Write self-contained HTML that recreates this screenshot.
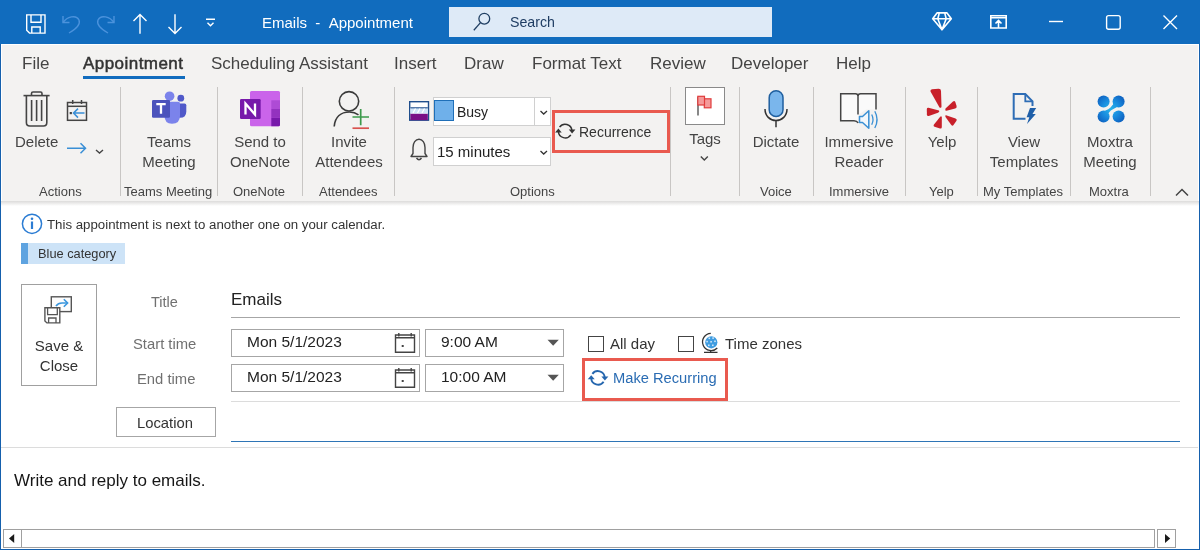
<!DOCTYPE html>
<html><head><meta charset="utf-8">
<style>
*{margin:0;padding:0;box-sizing:border-box}
html,body{width:1200px;height:550px;overflow:hidden;background:#fff;-webkit-font-smoothing:antialiased;font-family:"Liberation Sans",sans-serif;color:#444}
.a{position:absolute;white-space:nowrap}
.tab,.big,.grp,.a,.lbl,.val{will-change:transform}
#title{position:absolute;left:0;top:0;width:1200px;height:44px;background:#116cbe}
#lb{position:absolute;left:0;top:44px;width:1px;height:506px;background:#1560ad}
#rb{position:absolute;left:1199px;top:44px;width:1px;height:506px;background:#1560ad}
#bb{position:absolute;left:0;top:549px;width:1200px;height:1px;background:#1560ad}
#tabs{position:absolute;left:2px;top:45px;width:1196px;height:157px;background:#f3f2f1}
#shadow{position:absolute;left:1px;top:201px;width:1198px;height:5px;background:linear-gradient(#dcdbda,#fff)}
.tab{position:absolute;top:54px;font-size:17px;color:#444}
.big{position:absolute;font-size:15px;color:#444;text-align:center;line-height:20px;white-space:nowrap}
.grp{position:absolute;top:184px;font-size:13px;color:#444;white-space:nowrap}
.sep{position:absolute;top:87px;width:1px;height:109px;background:#c8c6c4}
svg{position:absolute;overflow:visible}
.box{position:absolute;border:1px solid #a6a6a6;background:#fff}
.lbl{position:absolute;font-size:14.5px;color:#707070;white-space:nowrap}
.val{position:absolute;font-size:15.5px;color:#222;white-space:nowrap}
</style></head><body>
<div id="title"></div>
<div id="tabs"></div>
<div id="shadow"></div>
<div id="lb"></div><div id="rb"></div><div id="bb"></div>

<!-- title bar text -->
<div class="a" style="left:262px;top:14px;font-size:15px;color:#fff">Emails &nbsp;- &nbsp;Appointment</div>
<div class="a" style="left:449px;top:7px;width:323px;height:30px;background:#deeaf7"></div>
<div class="a" style="left:510px;top:14px;font-size:14.2px;color:#1f3d63">Search</div>

<!-- tabs -->
<div class="tab" style="left:22px">File</div>
<div class="tab" style="left:83px;color:#333;letter-spacing:0.45px;-webkit-text-stroke:0.5px #333">Appointment</div>
<div class="a" style="left:83px;top:76px;width:102px;height:3px;background:#116cbe"></div>
<div class="tab" style="left:211px">Scheduling Assistant</div>
<div class="tab" style="left:394px">Insert</div>
<div class="tab" style="left:464px">Draw</div>
<div class="tab" style="left:532px">Format Text</div>
<div class="tab" style="left:650px">Review</div>
<div class="tab" style="left:731px">Developer</div>
<div class="tab" style="left:836px">Help</div>

<!-- ribbon separators -->
<div class="sep" style="left:120px"></div>
<div class="sep" style="left:217px"></div>
<div class="sep" style="left:302px"></div>
<div class="sep" style="left:394px"></div>
<div class="sep" style="left:670px"></div>
<div class="sep" style="left:739px"></div>
<div class="sep" style="left:813px"></div>
<div class="sep" style="left:905px"></div>
<div class="sep" style="left:977px"></div>
<div class="sep" style="left:1070px"></div>
<div class="sep" style="left:1150px"></div>

<!-- ribbon labels -->
<div class="big" style="left:15px;top:132px">Delete</div>
<div class="big" style="left:141px;top:132px;width:56px">Teams<br>Meeting</div>
<div class="big" style="left:225px;top:132px;width:70px">Send to<br>OneNote</div>
<div class="big" style="left:312px;top:132px;width:74px">Invite<br>Attendees</div>
<div class="big" style="left:680px;top:129px;width:50px">Tags</div>
<div class="big" style="left:740px;top:132px;width:72px">Dictate</div>
<div class="big" style="left:820px;top:132px;width:78px">Immersive<br>Reader</div>
<div class="big" style="left:915px;top:132px;width:54px">Yelp</div>
<div class="big" style="left:984px;top:132px;width:80px">View<br>Templates</div>
<div class="big" style="left:1078px;top:132px;width:64px">Moxtra<br>Meeting</div>

<div class="grp" style="left:39px">Actions</div>
<div class="grp" style="left:124px">Teams Meeting</div>
<div class="grp" style="left:233px">OneNote</div>
<div class="grp" style="left:319px">Attendees</div>
<div class="grp" style="left:510px">Options</div>
<div class="grp" style="left:760px">Voice</div>
<div class="grp" style="left:829px">Immersive</div>
<div class="grp" style="left:929px">Yelp</div>
<div class="grp" style="left:983px">My Templates</div>
<div class="grp" style="left:1089px">Moxtra</div>

<!-- options dropdowns -->
<div class="box" style="left:433px;top:97px;width:118px;height:29px;border-color:#d0d0d0"></div>
<div class="a" style="left:534px;top:98px;width:1px;height:27px;background:#d0d0d0"></div>
<div class="a" style="left:434px;top:100px;width:20px;height:21px;background:#6fb0ea;border:1.5px solid #1f6fb8"></div>
<div class="a" style="left:457px;top:104px;font-size:14px;color:#222">Busy</div>
<div class="box" style="left:433px;top:137px;width:118px;height:29px;border-color:#d0d0d0"></div>
<div class="a" style="left:437px;top:143px;font-size:15px;color:#222">15 minutes</div>
<div class="a" style="left:552px;top:110px;width:118px;height:43px;border:3px solid #e95a4f"></div>
<div class="a" style="left:579px;top:124px;font-size:14px;color:#333">Recurrence</div>

<!-- tags box -->
<div class="box" style="left:685px;top:87px;width:40px;height:38px;border-color:#8a8a8a"></div>

<!-- info bar -->
<div class="a" style="left:47px;top:217px;font-size:13.25px;color:#333">This appointment is next to another one on your calendar.</div>
<div class="a" style="left:21px;top:243px;width:104px;height:21px;background:#cde3f7"></div>
<div class="a" style="left:21px;top:243px;width:7px;height:21px;background:#5ea3e0"></div>
<div class="a" style="left:38px;top:246px;font-size:12.8px;color:#333">Blue category</div>

<!-- save & close -->
<div class="box" style="left:21px;top:284px;width:76px;height:102px;border-color:#a0a0a0"></div>
<div class="big" style="left:22px;top:336px;width:74px;color:#333">Save &amp;<br>Close</div>

<div class="lbl" style="left:151px;top:294px">Title</div>
<div class="val" style="left:231px;top:290px;font-size:17px">Emails</div>
<div class="a" style="left:231px;top:317px;width:949px;height:1px;background:#a6a6a6"></div>

<div class="lbl" style="left:133px;top:336px;font-size:14.8px">Start time</div>
<div class="lbl" style="left:137px;top:371px;font-size:14.8px">End time</div>
<div class="box" style="left:231px;top:329px;width:189px;height:28px"></div>
<div class="box" style="left:425px;top:329px;width:139px;height:28px"></div>
<div class="box" style="left:231px;top:364px;width:189px;height:28px"></div>
<div class="box" style="left:425px;top:364px;width:139px;height:28px"></div>
<div class="val" style="left:247px;top:333px">Mon 5/1/2023</div>
<div class="val" style="left:247px;top:368px">Mon 5/1/2023</div>
<div class="val" style="left:441px;top:333px">9:00 AM</div>
<div class="val" style="left:441px;top:368px">10:00 AM</div>

<div class="box" style="left:588px;top:336px;width:16px;height:16px;border-color:#444"></div>
<div class="lbl" style="left:610px;top:335px;color:#333;font-size:15px">All day</div>
<div class="box" style="left:678px;top:336px;width:16px;height:16px;border-color:#444"></div>
<div class="lbl" style="left:725px;top:335px;color:#333;font-size:15px">Time zones</div>

<div class="a" style="left:582px;top:358px;width:146px;height:43px;border:3px solid #e95a4f"></div>
<div class="a" style="left:613px;top:370px;font-size:14.7px;color:#2a6cb3">Make Recurring</div>

<div class="a" style="left:231px;top:401px;width:949px;height:1px;background:#dcdcdc"></div>
<div class="box" style="left:116px;top:407px;width:100px;height:30px;border-color:#a6a6a6"></div>
<div class="a" style="left:137px;top:415px;font-size:14.8px;color:#333">Location</div>
<div class="a" style="left:231px;top:441px;width:949px;height:1px;background:#2e75b6"></div>
<div class="a" style="left:1px;top:447px;width:1197px;height:1px;background:#dcdcdc"></div>

<!-- body -->
<div class="a" style="left:14px;top:471px;font-size:17px;color:#161616">Write and reply to emails.</div>

<!-- scrollbar -->
<div class="box" style="left:3px;top:529px;width:19px;height:19px;border-color:#a0a0a0"></div>
<div class="box" style="left:21px;top:529px;width:1134px;height:19px;border-color:#a0a0a0"></div>
<div class="box" style="left:1157px;top:529px;width:19px;height:19px;border-color:#a0a0a0"></div>
<svg style="left:0;top:0" width="1200" height="550">
<path d="M9 538.5 L14.2 534 L14.2 543 Z" fill="#1a1a1a"/>
<path d="M1170.2 538.5 L1165 534 L1165 543 Z" fill="#1a1a1a"/>
</svg>

<svg style="left:0;top:0" width="1200" height="550" fill="none" stroke-linecap="butt">
<!-- title bar icons -->
<g stroke="#fff" stroke-width="1.4">
 <path d="M26.7 14.9 H45 V33.1 H29.5 L26.7 30.3 Z"/>
 <path d="M31 14.9 V22.3 H41 V14.9"/>
 <path d="M31.8 33.1 V27 H40.2 V33.1"/>
 <path d="M140 14.5 V33.8 M133.5 21 L140 14.5 L146.5 21"/>
 <path d="M175 14.2 V33.5 M168.5 27 L175 33.5 L181.5 27"/>
 <path d="M206 19.3 H215 M207.5 22.8 L210.5 25.8 L213.5 22.8"/>
 <path d="M937 12.9 H947 L951.3 18.7 L942 29.8 L932.7 18.7 Z M932.7 18.7 H951.3 M939.3 12.9 L937.8 18.7 L942 29.8 L946.2 18.7 L944.7 12.9" stroke-width="1.6" stroke-linejoin="round"/>
 <path d="M990.8 15.8 H1006.2 V28 H990.8 Z M990.8 17.8 H1006.2 M998.5 20.5 V28 M995.5 23.5 L998.5 20.5 L1001.5 23.5" stroke-width="1.6"/>
 <path d="M1049 21.5 H1063"/>
 <rect x="1106.6" y="15.6" width="13.6" height="13.6" rx="2"/>
 <path d="M1163.5 15.5 L1177 29 M1177 15.5 L1163.5 29"/>
</g>
<g stroke="#4b92dc" stroke-width="1.4">
 <path d="M63 22.5 C 67 17 76 14 79 20 C 81 25 76 29 69 33"/>
 <path d="M63 16 V22.5 H69.5"/>
 <path d="M114 22.5 C 110 17 101 14 98 20 C 96 25 101 29 108 33"/>
 <path d="M114 16 V22.5 H107.5"/>
</g>
<g stroke="#203f63" stroke-width="1.3">
 <circle cx="484.3" cy="18.7" r="5.4"/>
 <path d="M480.5 22.6 L473.8 30.3"/>
</g>

<!-- delete -->
<g stroke="#444" stroke-width="1.6">
 <path d="M23.5 95.6 H49.6"/>
 <path d="M31.5 95.6 V93.6 Q31.5 92 33 92 H40.5 Q42 92 42 93.6 V95.6"/>
 <path d="M26.4 95.6 V122.5 Q26.4 126 29.8 126 H43.5 Q46.8 126 46.8 122.5 V95.6"/>
 <path d="M31.6 100 V121 M36.6 100 V121 M41.6 100 V121"/>
</g>
<g stroke="#444" stroke-width="1.5">
 <rect x="67.5" y="102.5" width="19" height="17.8"/>
 <path d="M67.5 106.3 H86.5" stroke-width="1.5"/>
 <path d="M72.7 100 V104 M81.5 100 V104"/>
</g>
<rect x="69.7" y="112" width="2.2" height="2.2" fill="#444"/>
<g stroke="#3a8fd6" stroke-width="1.5">
 <path d="M73.5 113.1 H84.5 M78 108.6 L73.5 113.1 L78 117.6"/>
 <path d="M67 148.2 H85.5 M80.5 143.2 L85.5 148.2 L80.5 153.2"/>
</g>
<path d="M96 150 L99.5 153 L103 150" stroke="#444" stroke-width="1.4"/>

<!-- teams -->
<circle cx="169.6" cy="96.2" r="4.8" fill="#7b83eb"/>
<circle cx="180.8" cy="98.2" r="3.4" fill="#5059c9"/>
<path d="M177 103.5 H184.5 Q186.3 103.5 186.3 105.3 V111.5 Q186.3 117.8 180 117.8 Q177 117.8 177 115 Z" fill="#5059c9"/>
<path d="M164.5 101.7 H178.3 Q180 101.7 180 103.4 V115.5 Q180 123.8 172 123.8 Q164.5 123.8 164.5 115.5 Z" fill="#7b83eb"/>
<rect x="152" y="100" width="18" height="17.7" rx="1.3" fill="#4b53bc"/>
<path d="M156.3 104.2 H165.7 M161 104.2 V113.8" stroke="#fff" stroke-width="2.3"/>

<!-- onenote -->
<rect x="250" y="91" width="30" height="35.3" rx="1.5" fill="#ca64ea"/>
<path d="M271.3 100.3 H280 V109 H271.3 Z" fill="#ae4bd5"/>
<path d="M271.3 109 H280 V117.7 H271.3 Z" fill="#9332bf"/>
<path d="M271.3 117.7 H280 V124.8 Q280 126.3 278.5 126.3 H271.3 Z" fill="#7719aa"/>
<rect x="240" y="99" width="20.7" height="20" rx="1.2" fill="#7719aa"/>
<path d="M245.5 114.5 V103.5 L255 114.5 V103.5" stroke="#fff" stroke-width="2.3" stroke-linejoin="miter"/>

<!-- invite attendees -->
<g stroke="#3a3a3a" stroke-width="1.6">
 <circle cx="349" cy="101.3" r="9.7"/>
 <path d="M334.2 126.5 C 335 117 341 112 349.5 112 C 353 112 356 113 358.5 114.8"/>
</g>
<path d="M352.5 117 H369 M360.7 109 V125.2" stroke="#3c9a4c" stroke-width="1.7"/>
<path d="M352.5 128.2 H369" stroke="#d9534f" stroke-width="1.7"/>

<!-- busy icon -->
<rect x="409.7" y="101.7" width="18.8" height="18.5" fill="#fff" stroke="#1f4e8c" stroke-width="1.4"/>
<rect x="410.4" y="108" width="17.4" height="5.5" fill="#cfe3f7"/>
<path d="M410.4 107.8 H427.8" stroke="#1f4e8c" stroke-width="1.1"/>
<path d="M413 113 L415.5 108.5 M417.5 113 L420 108.5 M422 113 L424.5 108.5" stroke="#fff" stroke-width="1.2"/>
<rect x="410.4" y="113.8" width="17.4" height="6.4" fill="#7a0f86"/>
<path d="M540.5 111 L543.7 114 L547 111" stroke="#333" stroke-width="1.3"/>
<path d="M540.5 151 L543.7 154 L547 151" stroke="#333" stroke-width="1.3"/>

<!-- bell -->
<path d="M411 156.5 H427 L425 153.5 V147.5 C 425 143 422.5 139.3 419 139.3 C 415.5 139.3 413 143 413 147.5 V153.5 Z M416.5 158 Q419 161.5 421.5 158" stroke="#444" stroke-width="1.4" stroke-linejoin="round"/>

<!-- recurrence -->
<g stroke="#333" stroke-width="1.5">
 <path d="M559.6 127.1 A6.8 6.8 0 0 1 571.9 130.5"/>
 <path d="M570.8 134.9 A6.8 6.8 0 0 1 558.4 131.5"/>
</g>
<path d="M568.8 129.6 H575.4 L572.1 133.4 Z" fill="#333"/>
<path d="M555.1 132.4 H561.7 L558.4 128.6 Z" fill="#333"/>

<!-- tags flag -->
<path d="M698 97 V115.5" stroke="#555" stroke-width="1.4"/>
<rect x="704.3" y="98.8" width="6.7" height="9" fill="#f59a9a" stroke="#e03c3c" stroke-width="1.2"/>
<rect x="697.8" y="96.3" width="6.7" height="8.7" fill="#f59a9a" stroke="#e03c3c" stroke-width="1.2"/>
<path d="M700.8 156.5 L704.3 160 L707.8 156.5" stroke="#444" stroke-width="1.4"/>

<!-- mic -->
<rect x="769.2" y="90.8" width="13.8" height="25.8" rx="6.9" fill="#7ab6ec" stroke="#1f5f9f" stroke-width="1.5"/>
<path d="M765 109 C 765 116 770 120.5 776 120.5 C 782 120.5 787 116 787 109 M776 120.5 V127.3" stroke="#333" stroke-width="1.5"/>

<!-- immersive reader -->
<path d="M840.7 93.5 H855.5 Q858 93.5 858 96 V123 Q856.5 120.7 854 120.7 H840.7 Z" fill="#fafafa"/>
<path d="M858 96 Q858 93.5 860.5 93.5 H876 V109.5 H866 L858 115 Z" fill="#fafafa"/>
<g stroke="#444" stroke-width="1.5">
 <path d="M858 114.5 V96 Q858 93.7 855.5 93.7 H840.7 V120.7 H854 Q857 120.7 858.2 123"/>
 <path d="M858 96 Q858 93.7 860.5 93.7 H876 V109.5"/>
</g>
<path d="M859.5 116.5 H862.5 L868.8 110.7 V128.3 L862.5 122.5 H859.5 Z" fill="#f3f8fc" stroke="#3a90d4" stroke-width="1.5" stroke-linejoin="round"/>
<path d="M871.7 114.5 Q874.3 119.5 871.7 124.8" stroke="#3a90d4" stroke-width="1.3"/>
<path d="M874.8 111.3 Q879.3 119.5 874.8 128" stroke="#3a90d4" stroke-width="1.3"/>

<!-- yelp -->
<g fill="#c8202a">
 <path d="M930.5 91.5 Q930 89.5 932 89.3 L938.5 88.8 Q941 88.7 941 91 L941.5 106.5 Q941.5 108.5 939.5 107.5 Z"/>
 <path d="M945.5 108.5 L953 101.5 Q954.5 100.5 955.3 102 L956.6 106 Q957 108 955.2 108.5 L946.5 110.7 Q944.5 111 945.5 108.5 Z"/>
 <path d="M939 110.5 L928.5 107.8 Q927 107.5 926.8 109 L926.9 114.5 Q927 116.5 928.8 116 L938 112.8 Q940 112 939 110.5 Z"/>
 <path d="M941.8 117.5 L941.8 127 Q941.8 129 940 128.5 L934.5 126.8 Q933 126.2 933.8 124.8 L940 117 Q941.5 115.5 941.8 117.5 Z"/>
 <path d="M946 115.2 L955.5 118.5 Q957.5 119.3 956.5 120.8 L953.5 125 Q952.5 126.3 951.3 125 L945.5 117 Q944.8 115 946 115.2 Z"/>
</g>

<!-- view templates -->
<path d="M1025.5 118.7 H1013.7 V94 H1025.3 L1032.5 101.4 V106" stroke="#2e6db5" stroke-width="2"/>
<path d="M1025.3 94 V101.4 H1032.5" stroke="#2e6db5" stroke-width="1.8"/>
<path d="M1030 108 H1036.2 L1032.5 114 H1035.8 L1027 124 L1029.3 117.2 H1026.6 Z" fill="#1f5fa8"/>

<!-- moxtra -->
<defs>
 <radialGradient id="mx" cx="1110.6" cy="108.9" r="19" gradientUnits="userSpaceOnUse"><stop offset="0" stop-color="#27b4ea"/><stop offset="0.45" stop-color="#1a8ddf"/><stop offset="1" stop-color="#0a55b8"/></radialGradient>
</defs>
<g fill="url(#mx)">
 <circle cx="1103.6" cy="101.4" r="6"/>
 <circle cx="1118.6" cy="101.4" r="6"/>
 <circle cx="1103.6" cy="116.4" r="6"/>
 <circle cx="1118.6" cy="116.4" r="6"/>
 <path d="M1113.5 104.5 Q1111 108 1108.5 111.5 L1105.5 113 Q1109.5 110.5 1111.5 109 Q1113 106.5 1115 104 Z"/>
 <path d="M1114 103.5 L1117 107 Q1112 109.5 1110.8 110.5 Q1109.5 112 1107.3 114.5 L1104.5 111 Q1109 109 1110.5 107.5 Q1111.8 106 1114 103.5 Z"/>
</g>
<path d="M1176 195.5 L1182 189.5 L1188 195.5" stroke="#444" stroke-width="1.5"/>

<!-- info icon -->
<circle cx="32" cy="223.8" r="9.6" stroke="#2b7cd3" stroke-width="1.5"/>
<circle cx="32" cy="218.7" r="1.3" fill="#2b7cd3"/>
<path d="M32 221.5 V229" stroke="#2b7cd3" stroke-width="2.2"/>

<!-- save & close icon -->
<rect x="51.3" y="296.8" width="20" height="14.8" fill="#fdfdfd" stroke="#555" stroke-width="1.4"/>
<path d="M56 306 Q58 303 62 303 H67.5" stroke="#3a96dd" stroke-width="1.6"/>
<path d="M63.8 299.2 L67.6 303 L63.8 306.8" stroke="#3a96dd" stroke-width="1.6"/>
<path d="M44.9 307.7 H59.8 V322.9 H46.9 L44.9 320.9 Z" fill="#fff" stroke="#555" stroke-width="1.4"/>
<path d="M47.6 307.7 V314.6 H57.3 V307.7 M48.6 322.9 V318 H56 V322.9" stroke="#555" stroke-width="1.3"/>

<!-- calendar pickers -->
<g stroke="#444" stroke-width="1.4">
 <path d="M395.5 335 H414.5 V352.3 H395.5 Z M395.5 337.8 H414.5 M398.8 333 V336.5 M411.2 333 V336.5"/>
 <path d="M395.5 370 H414.5 V387.3 H395.5 Z M395.5 372.8 H414.5 M398.8 368 V371.5 M411.2 368 V371.5"/>
</g>
<rect x="401.7" y="345" width="2" height="2" fill="#444"/>
<rect x="401.7" y="380" width="2" height="2" fill="#444"/>
<path d="M547.5 339.7 H558.8 L553.15 345.8 Z" fill="#555"/>
<path d="M547.5 374.7 H558.8 L553.15 380.8 Z" fill="#555"/>

<!-- globe -->
<circle cx="711.3" cy="342.3" r="6.1" fill="#3f9ce0"/>
<g fill="#cfe6f8">
 <rect x="708.5" y="337.5" width="1.6" height="1.6"/><rect x="712.3" y="337.3" width="1.6" height="1.6"/>
 <rect x="706.3" y="340.8" width="1.6" height="1.6"/><rect x="710.3" y="341" width="1.6" height="1.6"/><rect x="714.2" y="340.5" width="1.6" height="1.6"/>
 <rect x="708" y="344.5" width="1.6" height="1.6"/><rect x="712" y="344.5" width="1.6" height="1.6"/>
</g>
<path d="M710.8 333.4 A8.6 8.6 0 1 0 717.3 348 M710.6 350.3 V352.3 M704 352.4 H717.5" stroke="#333" stroke-width="1.3"/>

<!-- make recurring icon -->
<g transform="translate(32.8 246.8)">
<g stroke="#2566ae" stroke-width="1.9">
 <path d="M559.6 127.1 A6.8 6.8 0 0 1 571.9 130.5"/>
 <path d="M570.8 134.9 A6.8 6.8 0 0 1 558.4 131.5"/>
</g>
<path d="M568.6 129.6 H575.6 L572.1 133.6 Z" fill="#2566ae"/>
<path d="M554.9 132.4 H561.9 L558.4 128.4 Z" fill="#2566ae"/>
</g>
</svg>
</body></html>
